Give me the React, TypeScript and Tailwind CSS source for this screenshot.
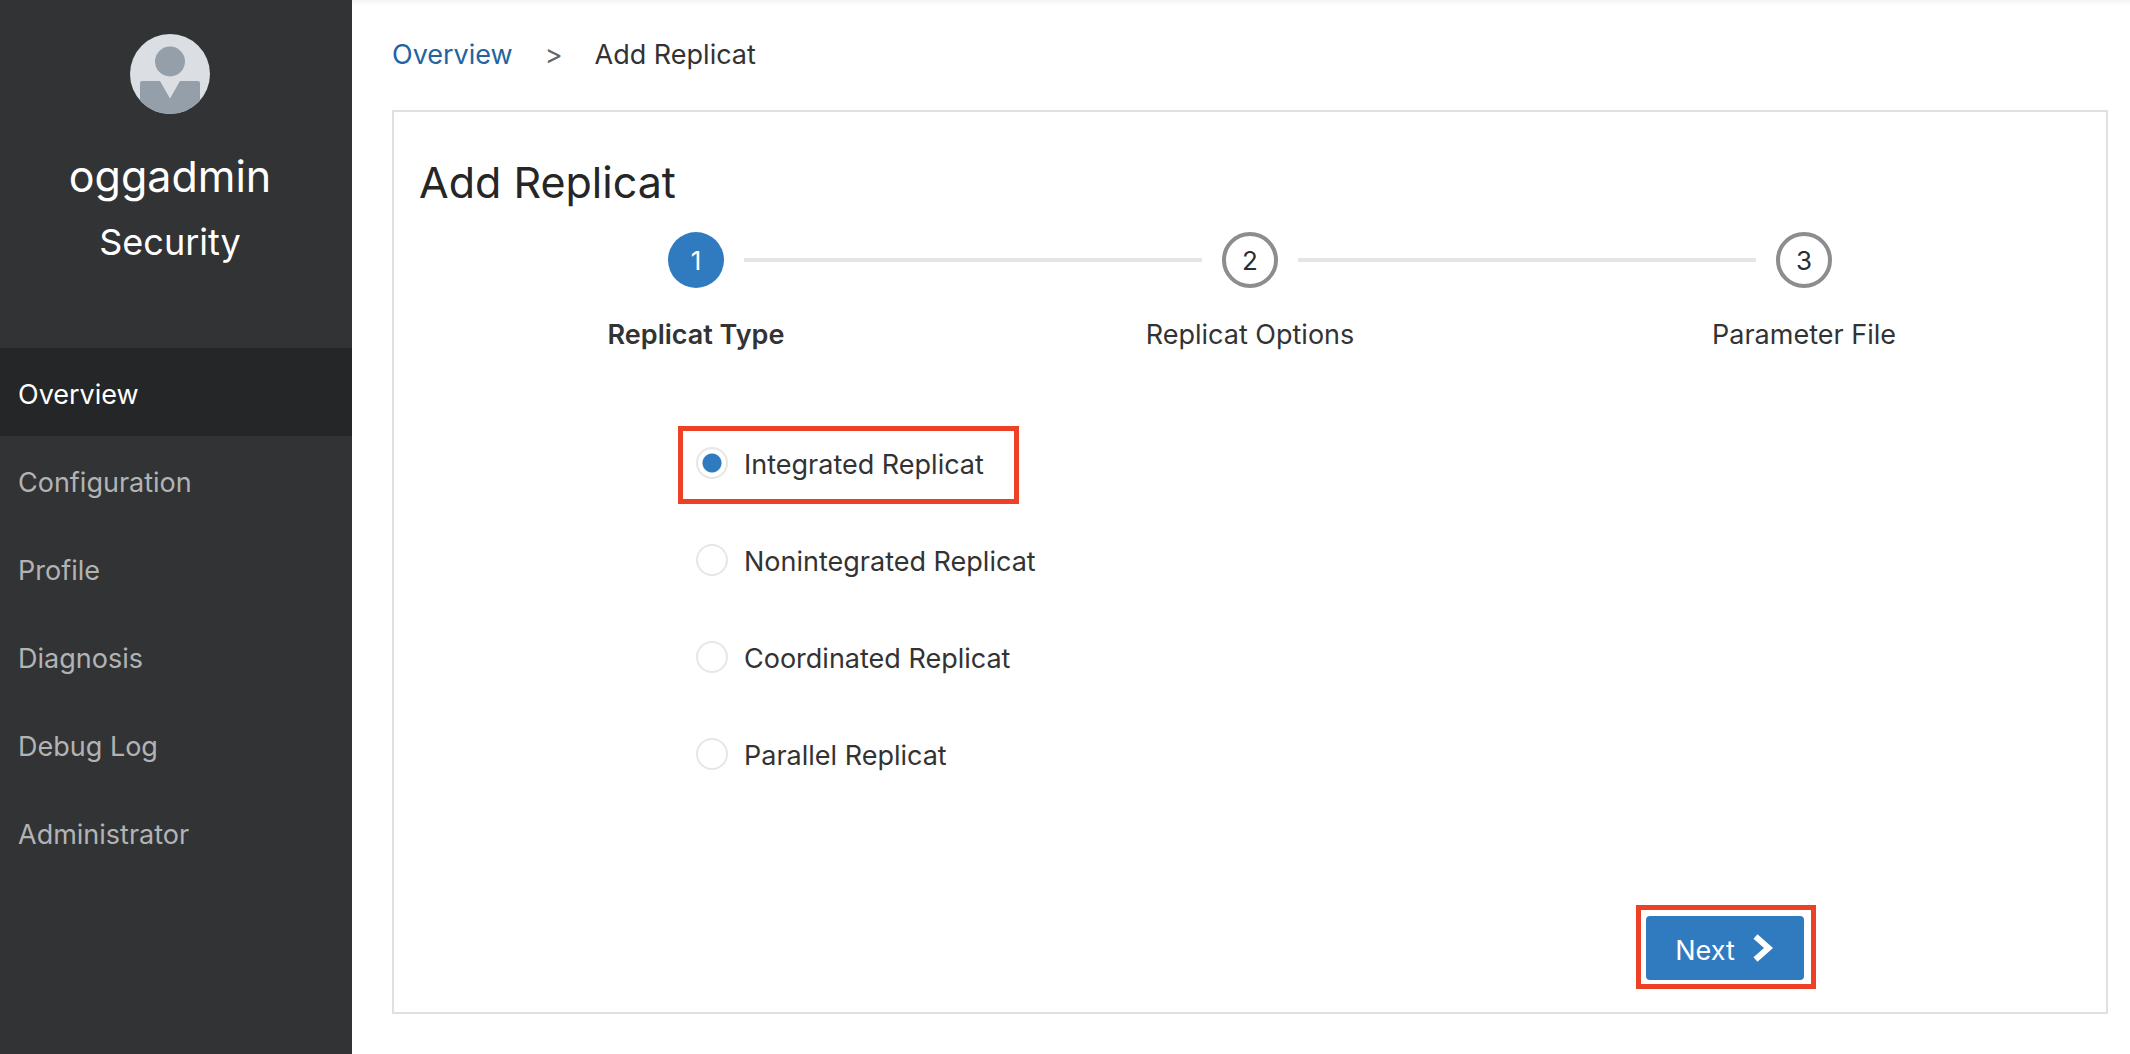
import { useState } from "react";

const NAV = ["Overview", "Configuration", "Profile", "Diagnosis", "Debug Log", "Administrator"];
const STEPS = ["Replicat Type", "Replicat Options", "Parameter File"];
const TYPES = ["Integrated Replicat", "Nonintegrated Replicat", "Coordinated Replicat", "Parallel Replicat"];

function Avatar() {
  return (
    <svg viewBox="0 0 80 80" className="size-20" role="img" aria-label="User avatar">
      <defs>
        <clipPath id="avatar-clip">
          <circle cx="40" cy="40" r="40" />
        </clipPath>
      </defs>
      <g clipPath="url(#avatar-clip)">
        <rect width="80" height="80" fill="#dbdfe4" />
        <circle cx="40" cy="27.5" r="15" fill="#959fa9" />
        <path d="M12 47h18l10 17.5L50 47h18a2 2 0 0 1 2 2v31H10V49a2 2 0 0 1 2-2z" fill="#959fa9" />
      </g>
    </svg>
  );
}

function Sidebar() {
  return (
    <aside className="flex w-[352px] shrink-0 flex-col bg-[#323335]">
      <div className="flex h-[348px] flex-col items-center pt-[34px] pr-3 text-white">
        <Avatar />
        <p className="mt-[30px] text-[43px] leading-[64px]">oggadmin</p>
        <p className="text-[36px] leading-[68px]">Security</p>
      </div>
      <nav className="flex flex-col">
        {NAV.map((item, i) => (
          <a
            key={item}
            href="#"
            aria-current={i === 0 ? "page" : undefined}
            className={
              i === 0
                ? "flex h-[88px] items-center bg-[#252627] px-[18px] pt-1.5 text-[27px] text-white"
                : "flex h-[88px] items-center px-[18px] pt-1.5 text-[27px] text-[#b2b3b4]"
            }
          >
            {item}
          </a>
        ))}
      </nav>
    </aside>
  );
}

function Steps() {
  return (
    <ol className="grid grid-cols-3">
      {STEPS.map((label, i) => (
        <li key={label} className="flex flex-col items-center">
          <div className="flex w-full items-center gap-5">
            <span className={i === 0 ? "flex-1" : "h-1 flex-1 bg-[#e4e6e5]"} />
            <button
              type="button"
              aria-label={`${i + 1} ${label}`}
              className={
                i === 0
                  ? "size-14 rounded-full bg-[#307bc0] text-[26px] text-white"
                  : "size-14 rounded-full border-4 border-[#8c8d8f] text-[26px] text-[#2d2d2e]"
              }
            >
              {i + 1}
            </button>
            <span className={i === 2 ? "flex-1" : "h-1 flex-1 bg-[#e4e6e5]"} />
          </div>
          <span className={i === 0 ? "mt-7 text-[27px] leading-[38px] font-semibold" : "mt-7 text-[27px] leading-[38px]"}>
            {label}
          </span>
        </li>
      ))}
    </ol>
  );
}

export default function App() {
  const [type, setType] = useState(TYPES[0]);
  return (
    <div className="flex min-h-screen bg-white font-[Inter,sans-serif] text-[#333334]">
      <Sidebar />
      <main className="flex min-w-0 flex-1 flex-col bg-[linear-gradient(#f3f3f3,#ffffff_6px)] pr-[22px] pb-10 pl-10">
        <nav aria-label="Breadcrumb" className="flex h-[110px] items-center text-[27px]">
          <a href="#" className="text-[#23639f]">
            Overview
          </a>
          <span className="mx-8 text-[#646566]">&gt;</span>
          <span>Add Replicat</span>
        </nav>
        <section className="flex flex-1 flex-col border-2 border-[#e0e0e1] px-[25px] pt-9">
          <h1 className="text-[43px] leading-[68px] font-normal text-[#262627]">Add Replicat</h1>
          <div className="mt-4">
            <Steps />
          </div>
          <fieldset aria-label="Replicat Type" className="mt-[60px] ml-[16.6667%] flex flex-col">
            {TYPES.map((t, i) => (
              <label key={t} className="relative flex h-[97px] items-center gap-4 self-start text-[27px]">
                <input
                  type="radio"
                  name="replicat-type"
                  checked={type === t}
                  onChange={() => setType(t)}
                  className="size-8 appearance-none rounded-full border-2 border-[#e6e6e7] bg-white checked:bg-[radial-gradient(circle,#307bc0_9px,transparent_10px)]"
                />
                <span className="pt-1.5">{t}</span>
                {i === 0 && (
                  <span className="pointer-events-none absolute top-3 -left-[18px] h-[78px] w-[341px] border-5 border-[#ed4127]" />
                )}
              </label>
            ))}
          </fieldset>
          <div className="mt-auto mr-[265px] mb-[23px] self-end border-5 border-[#ed4127] pt-1.5 pr-[7px] pb-1 pl-[5px]">
            <button
              type="button"
              className="flex h-16 w-[158px] items-center justify-center gap-[18px] rounded bg-[#307bc0] text-[27px] text-white"
            >
              <span className="pt-1.5">Next</span>
              <svg viewBox="0 0 22 28" className="h-7 w-[22px]" fill="none" stroke="currentColor" strokeWidth="6" aria-hidden="true">
                <path d="M2.5 2.5L15.5 14L2.5 25.5" />
              </svg>
            </button>
          </div>
        </section>
      </main>
    </div>
  );
}
